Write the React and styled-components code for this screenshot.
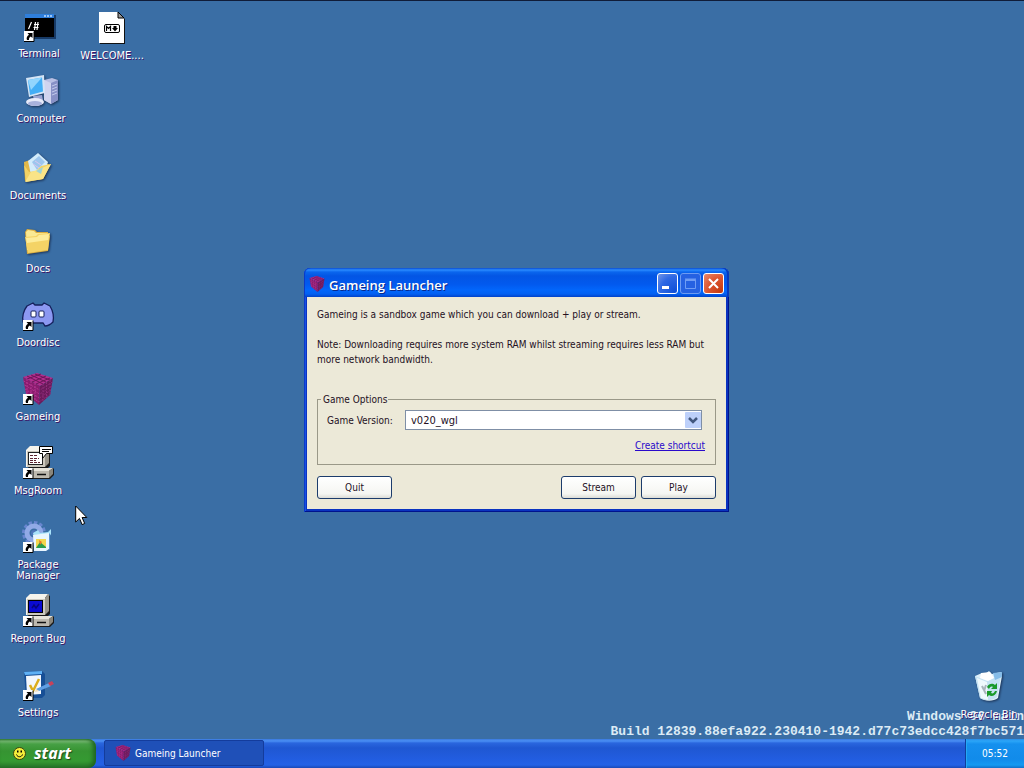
import React from "react";
import styled, { createGlobalStyle } from "styled-components";

const Global = createGlobalStyle`
  *, *::before, *::after { box-sizing: border-box; }
  body { margin: 0; background: #3a6ea5; }
  button, select { font: inherit; color: inherit; }
`;

const Screen = styled.div`
  min-height: 100vh;
  display: flex;
  flex-direction: column;
  background: #3a6ea5;
  font-family: "DejaVu Sans Condensed", "Liberation Sans", sans-serif;
  font-size: 10px;
`;

const Desktop = styled.main`
  position: relative;
  flex: 1;
  overflow: hidden;
  border-top: 1px solid #101c38;
`;

const Shortcut = styled.button`
  position: absolute;
  top: ${(p) => p.$y}px;
  ${(p) => (p.$right !== undefined ? `right: ${p.$right}px;` : `left: ${p.$x}px;`)}
  width: 74px;
  padding: 0;
  border: 0;
  background: none;
  display: flex;
  flex-direction: column;
  align-items: center;
  gap: 6px;
  color: #fff;
  font-size: 11px;
  line-height: 11px;
  text-shadow: 1px 1px #3c1466;
  z-index: 2;
`;

const IconFrame = styled.svg`
  width: 32px;
  height: 32px;
  overflow: visible;
  filter: ${(p) => (p.$shadow ? "drop-shadow(1px 1px 1px rgba(0, 0, 20, 0.55))" : "none")};
`;

const Watermark = styled.p`
  position: absolute;
  right: 0;
  bottom: 0;
  margin: 0;
  text-align: right;
  color: #dcebf5;
  font-family: "Liberation Mono", monospace;
  font-size: 13px;
  font-weight: 700;
  line-height: 15px;
`;

const Pointer = styled.svg`
  position: absolute;
  left: 75px;
  top: 504px;
  width: 13px;
  height: 21px;
`;

const Window = styled.section`
  position: absolute;
  left: 304px;
  top: 267px;
  width: 425px;
  padding: 0 3px 3px;
  border-radius: 6px 6px 0 0;
  background: #0a33c0;
  box-shadow: inset 1px 0 #0a3ac8, inset -1px -1px #00138c, inset 2px 0 #1750e4;
  z-index: 3;
`;

const TitleBar = styled.header`
  height: 29px;
  margin: 0 -3px;
  padding: 2px 5px 0;
  display: flex;
  align-items: center;
  gap: 4px;
  border-radius: 6px 6px 0 0;
  background: linear-gradient(#0a4bd0 0, #2a8bff 2px, #0a66ee 4px, #0355e4 8px, #0259ee 16px, #0266fb 22px, #0260f2 26px, #0242c8 29px);
  box-shadow: inset 1px 0 #0a3ac8, inset -2px 0 #0638bd;
`;

const Title = styled.h1`
  flex: 1;
  margin: 0;
  padding-top: 2px;
  color: #fff;
  font-family: "Open Sans", "Noto Sans", sans-serif;
  font-size: 13px;
  font-weight: 600;
  line-height: 18px;
  text-shadow: 1px 1px #0a2a8c;
`;

const TitleButtons = styled.div`
  display: flex;
  gap: 2px;
`;

const TitleButton = styled.button`
  width: 21px;
  height: 21px;
  padding: 0;
  border: 1px solid ${(p) => (p.disabled ? "#6d9bf2" : "#fff")};
  border-radius: 3px;
  background: ${(p) =>
    p.$close
      ? "radial-gradient(circle at 90% 90%, #c63a0e 0, #dc5530 55%, #e98a6c 100%)"
      : p.disabled
      ? "#2561e2"
      : "radial-gradient(circle at 90% 90%, #1050d8 0, #2f69e4 60%, #7396e8 100%)"};
  display: grid;
  place-items: center;

  svg { width: 19px; height: 19px; }
`;

const Body = styled.div`
  padding: 10px;
  background: #ece9d8;
  color: #24101e;
  line-height: 15px;
`;

const Text = styled.p`
  margin: 0 0 15px;
`;

const Options = styled.fieldset`
  margin: 25px 0 11px;
  padding: 3px 10px 11px 9px;
  border: 1px solid #9a9888;

  legend { margin-left: -6px; padding: 0 1px 0 2px; }
`;

const Field = styled.div`
  display: flex;
  align-items: center;
  margin-right: 3px;

  label { width: 78px; }
`;

const SelectBox = styled.div`
  position: relative;
  flex: 1;
  height: 20px;

  svg {
    position: absolute;
    right: 1px;
    top: 2px;
    width: 16px;
    height: 16px;
    pointer-events: none;
  }
`;

const Select = styled.select`
  display: block;
  appearance: none;
  width: 100%;
  height: 20px;
  padding: 0 20px 0 5px;
  border: 1px solid #7f8fa6;
  border-radius: 0;
  background: #fff;
  font-size: 11px;
`;

const LinkRow = styled.div`
  margin-top: 9px;
  line-height: 14px;
  text-align: right;

  a { color: #2a0acb; text-decoration: underline; }
`;

const Actions = styled.div`
  display: flex;
  gap: 5px;
`;

const Button = styled.button`
  width: 75px;
  height: 23px;
  padding: 0;
  border: 1px solid #1c3c6c;
  border-radius: 3px;
  background: linear-gradient(#fff, #f5f6f2 80%, #dcdcd6);
  ${(p) => p.$first && "margin-right: auto;"}
`;

const Taskbar = styled.footer`
  height: 29px;
  display: flex;
  align-items: stretch;
  color: #fff;
  background: linear-gradient(#3a7ade 0, #4a8ff5 2px, #2a66de 4px, #1f57d2 9px, #225de0 20px, #2462e6 26px, #1a49b6 29px);
`;

const StartButton = styled.button`
  width: 96px;
  padding: 0 0 1px 13px;
  border: 0;
  border-radius: 0 8px 8px 0;
  display: flex;
  align-items: center;
  gap: 8px;
  background: linear-gradient(#3f8a3f 0, #7dbd78 2px, #47a045 5px, #369432 12px, #359a32 22px, #27762a 29px);
  box-shadow: inset -3px 0 4px #1f6420;
  color: #fff;
  font-family: "Noto Sans", sans-serif;
  font-size: 16px;
  font-weight: 700;
  font-style: italic;
  line-height: 20px;
  text-shadow: 1px 1px 1px #1c4a1c;

  svg { width: 13px; height: 13px; }
`;

const TaskButton = styled.button`
  width: 160px;
  height: 26px;
  margin: 1px 0 0 8px;
  padding: 0 10px;
  border: 1px solid #143c9c;
  border-radius: 2px;
  display: flex;
  align-items: center;
  gap: 4px;
  background: #1f50b8;
  text-align: left;
`;

const Tray = styled.time`
  width: 59px;
  margin-left: auto;
  border-left: 1px solid #0f3f9c;
  display: grid;
  place-items: center;
  background: linear-gradient(#2a8ce8 0, #2ba6f8 2px, #1590ee 5px, #118bea 20px, #149af2 26px, #1070c8 29px);
  box-shadow: inset 1px 0 #25a8f5;
`;

const SmallIcon = styled.svg`
  width: 16px;
  height: 16px;
`;

const Arrow = () => (
  <g>
    <rect x="1" y="21" width="10" height="11" fill="#fff" />
    <path d="M1 31.500h10v-10" fill="none" stroke="#000" />
    <path d="M4.500 23h5v5l-1.700-1.600c-1.600 1-2 2-1.800 3.600H4c-1-2 .2-4 2-5.200z" fill="#000" />
  </g>
);

const CubeArt = () => (
  <g>
    <path d="M1 4L15 0l16 5-13 8z" fill="#b32d8e" />
    <path d="M1 4l17 9-1 19L4 21z" fill="#8a1c6e" />
    <path d="M31 5l-13 8-1 19 11-10z" fill="#6b1a5a" />
    <path d="M5 3l16 8M9 2l15 7M13 1l15 6M5 6L19 1M10 9l14-6M14 11l14-6" stroke="#6c1658" strokeWidth="1" />
    <path d="M1.500 8l16 9M2.500 12l15 9M3 16l14.500 9M4 20l13 9M5 6v16M9 8v17M13 10v18" stroke="#b23490" strokeWidth="1" strokeDasharray="2 1" />
    <path d="M30.500 9L18 17M30 13l-12 8M29 17l-11.500 8M28.500 21L17 29M21 11v18M24.500 9v16M28 7v15" stroke="#8c2a78" strokeWidth="1" strokeDasharray="2 1" />
  </g>
);

const PcArt = () => (
  <g>
    <path d="M6 20V3l3-3h17l2 1v18l-3 3H7z" fill="#1a1a1a" />
    <path d="M4 3l4-4h18l-3 4z" fill="#f6f4ec" />
    <path d="M4 3h19v17H4z" fill="#cdc9bf" />
    <path d="M4 3h19v1H5v16H4z" fill="#f6f4ec" />
    <path d="M23 3l3-4h1v17l-4 4z" fill="#9a968c" />
    <path d="M1 24l4-3h26l1 1v6l-4 4H1z" fill="#1a1a1a" />
    <path d="M1 24l5-3h25l-4 3z" fill="#e6e3da" />
    <path d="M1 24h26v7H1z" fill="#bdb9af" />
    <path d="M27 24l4-3v6l-4 4z" fill="#8a867c" />
    <path d="M15 27.500h9" stroke="#111" strokeWidth="1.500" />
  </g>
);

const art = {
  terminal: (
    <g>
      <rect x="3" y="5" width="30" height="24" fill="#173a66" />
      <rect x="2" y="4" width="29" height="23" fill="#000" />
      <rect x="2" y="4" width="29" height="4" fill="#2f7fdc" />
      <path d="M21 6h2M24 6h2M27 6h2" stroke="#9cc6f6" strokeWidth="2" />
      <path d="M5.500 19l3-7M11 14.500h5M10.500 17.500h5M12.500 12l-1 8M15 12l-1 8" stroke="#fff" strokeWidth="1.200" fill="none" />
      <Arrow />
    </g>
  ),
  note: (
    <g>
      <path d="M4 1h19l6 6v25H4z" fill="#111" />
      <path d="M3 0h19l6 6v25H3z" fill="#fff" />
      <path d="M22 0v6h6z" fill="#9a9a9a" stroke="#000" />
      <rect x="8.500" y="12.500" width="15" height="8" rx="1.500" fill="#fff" stroke="#000" />
      <path d="M10.500 19v-4.500l2 2 2-2V19M19 14v3" fill="none" stroke="#000" strokeWidth="1.200" />
      <path d="M16 16h6l-3 3.500zM17.500 14h3v3h-3z" />
    </g>
  ),
  computer: (
    <g>
      <path d="M19 5l8-2 6 2v20l-7 4-7-4z" fill="#b8bfe4" />
      <path d="M26 8l7-3v20l-7 4z" fill="#8790c6" />
      <path d="M19 5l7 3v21l-7-4z" fill="#d0d4ef" />
      <path d="M27 11l5-2M27 14l5-2M27 17l5-2M27 20l5-2" stroke="#c3caec" />
      <path d="M8 21l9-1 1 5H9z" fill="#9aa4d3" />
      <ellipse cx="10" cy="27" rx="9" ry="4" fill="#e8ebf9" />
      <ellipse cx="10" cy="28.500" rx="7" ry="2.500" fill="#a9b2dc" />
      <path d="M1 3l18-3 1 18-16 4z" fill="#d3e4f6" />
      <path d="M3 5l14-2.500 1 14L5 20z" fill="#43aef6" />
      <path d="M3 5l14-2.500L6 15z" fill="#93d5fd" />
    </g>
  ),
  documents: (
    <g>
      <path d="M2 10l6-2 4 3 15 1-6 15L3 29z" fill="#e3b848" />
      <path d="M6 9L16 1l10 9-4 12-13 1z" fill="#d3ecfb" />
      <path d="M10 10l7-6 6 6-8 8z" fill="#9dc6ee" />
      <path d="M13 9l6 4M11 12l6 4" stroke="#d7c6f0" />
      <path d="M2 13l2 17 17-3 8-15-10 2-5 5-7 1z" fill="#f2d264" />
      <path d="M3 30L9 20l9-3 11-5-8 15z" fill="#fae487" />
      <path d="M14 19l5 3 2-7z" fill="#9fd3d7" />
    </g>
  ),
  folder: (
    <g>
      <path d="M3 7l2-3 8 1 2 2h11v3l2 1-2 15-21 3z" fill="#dcae40" />
      <path d="M4 7l2-2 6 1 2 2h11v17H5z" fill="#fae993" />
      <path d="M3 12l11-1 2-2 12-1-2 17-20 3z" fill="#f4d366" />
      <path d="M4 13l11-1 2-2 10-1-.7 6L5 18z" fill="#fdec9a" />
    </g>
  ),
  doordisc: (
    <g>
      <path d="M5 7l6-3 2 2h7l2-2 6 3c3 5 4 11 3 16-3 3-6 4-8 4l-2-3H10l-2 3c-3-1-5-2-7-4C0 17 2 11 5 7z" fill="#8c98f2" stroke="#15205c" strokeWidth="1.300" />
      <rect x="9" y="12" width="5" height="6" rx="1" fill="#fff" stroke="#15205c" />
      <rect x="17" y="12" width="5" height="6" rx="1" fill="#fff" stroke="#15205c" />
      <Arrow />
    </g>
  ),
  gameing: (
    <g>
      <CubeArt />
      <Arrow />
    </g>
  ),
  msgroom: (
    <g>
      <PcArt />
      <rect x="6.500" y="5.500" width="14" height="12" fill="#fff" stroke="#222" />
      <path d="M8 8.500h7M8 11.500h9M8 13.500h6M8 15.500h10" stroke="#5c2430" strokeDasharray="3 1" />
      <path d="M17.500-.5h13v7h-6l-4 5v-5h-3z" fill="#fff" stroke="#000" />
      <path d="M20 2.500h9M20 4.500h7" stroke="#000" />
      <Arrow />
    </g>
  ),
  packages: (
    <g>
      <circle cx="12" cy="12" r="10" fill="none" stroke="#6886cf" strokeWidth="4" strokeDasharray="3.200 2" />
      <circle cx="12" cy="12" r="7" fill="none" stroke="#91aae6" strokeWidth="5" />
      <circle cx="12" cy="12" r="3" fill="#4f76bb" />
      <path d="M11 12l5-3 2 3 8-1 3-3v5l-2 3H12z" fill="#a8e2fa" />
      <path d="M11 14l16-2v16l-3 2H12z" fill="#e9f6ff" />
      <path d="M27 12l1 1v15l-1 1z" fill="#5b93cf" />
      <path d="M14 18h10v9H14z" fill="#f4d64e" />
      <path d="M14 27l4-6 6 5v1z" fill="#2a9c4c" />
      <path d="M17 19l3 2-2 3z" fill="#e87428" />
      <Arrow />
    </g>
  ),
  report: (
    <g>
      <PcArt />
      <rect x="6.500" y="5.500" width="14" height="12" fill="#0a0ad0" stroke="#000" />
      <path d="M10 13l2-3 2 3 3-4" stroke="#05057c" strokeWidth="1.500" fill="none" />
      <Arrow />
    </g>
  ),
  settings: (
    <g>
      <path d="M2 3l18-1 3 3v21l-3 3H4z" fill="#174f96" />
      <path d="M2 3l18-1v3L3 6z" fill="#5fb1f5" />
      <path d="M4 7l15-1v19L5 26z" fill="#f2f7fd" />
      <path d="M8 16l3 6 6-12" fill="none" stroke="#dcae1e" strokeWidth="2.500" />
      <path d="M14 20l13-6 2 3-12 5z" fill="#5f9fe4" />
      <path d="M14 20l3 2-4 1z" fill="#f3dcb4" />
      <path d="M26 14l4-2 2 3-4 2z" fill="#c8425a" />
      <Arrow />
    </g>
  ),
  bin: (
    <g>
      <path d="M2 5l7-3 3 1 4-3 3 3 9-2 1 4-4 22c-5 4-14 3-18 0z" fill="#dff1fb" />
      <path d="M2 5l12 5 14-6-4 22c-5 4-13 4-17 1z" fill="#c4e2f3" />
      <path d="M4 7l10 4 1 18-7-2z" fill="#eef9fd" />
      <path d="M20 2l9-1v5l-7 3z" fill="#85bce8" />
      <path d="M8 2l9-1 4 6-6 3-8-3z" fill="#fff" />
      <path d="M9 15l4 8M13 14l-2 6" stroke="#a9b5bd" strokeWidth="2" />
      <path d="M14 16c2-4 6-4 8-2l2-2v6h-6l2-2c-2-1-3 0-4 2zM24 20c-1 5-6 6-8 4l-2 2v-6h5l-1 2c2 1 3 0 4-2z" fill="#199a2b" />
    </g>
  ),
};

const shortcuts = [
  { id: "terminal", label: "Terminal", x: 2, y: 9 },
  { id: "note", label: "WELCOME....", x: 75, y: 11 },
  { id: "computer", label: "Computer", x: 4, y: 74, shadow: true },
  { id: "documents", label: "Documents", x: 1, y: 151, shadow: true },
  { id: "folder", label: "Docs", x: 1, y: 224, shadow: true },
  { id: "doordisc", label: "Doordisc", x: 1, y: 298 },
  { id: "gameing", label: "Gameing", x: 1, y: 372 },
  { id: "msgroom", label: "MsgRoom", x: 1, y: 446 },
  { id: "packages", label: "Package Manager", x: 1, y: 520 },
  { id: "report", label: "Report Bug", x: 1, y: 594 },
  { id: "settings", label: "Settings", x: 1, y: 668 },
  { id: "bin", label: "Recycle Bin", right: -2, y: 670, shadow: true },
];

export default function App() {
  return (
    <Screen>
      <Global />
      <Desktop>
        <Watermark>
          Windows 96 main
          <br />
          Build 12839.88efa922.230410-1942.d77c73edcc428f7bc571
        </Watermark>
        {shortcuts.map((s) => (
          <Shortcut key={s.id} type="button" $x={s.x} $y={s.y} $right={s.right}>
            <IconFrame viewBox="0 0 32 32" $shadow={s.shadow} aria-hidden="true">
              {art[s.id]}
            </IconFrame>
            <span>{s.label}</span>
          </Shortcut>
        ))}
        <Window aria-label="Gameing Launcher">
          <TitleBar>
            <SmallIcon viewBox="0 0 32 32" aria-hidden="true">
              <CubeArt />
            </SmallIcon>
            <Title>Gameing Launcher</Title>
            <TitleButtons>
              <TitleButton type="button" aria-label="Minimize">
                <svg viewBox="0 0 19 19">
                  <path d="M4 12h7v3H4z" fill="#fff" />
                </svg>
              </TitleButton>
              <TitleButton type="button" aria-label="Maximize" disabled>
                <svg viewBox="0 0 19 19">
                  <path d="M4.500 5.500h10v9h-10zM4 5h11M4 6.500h11" fill="none" stroke="#6f9cf4" />
                </svg>
              </TitleButton>
              <TitleButton type="button" aria-label="Close" $close>
                <svg viewBox="0 0 19 19">
                  <path d="M5 5l9 9M14 5l-9 9" stroke="#fff" strokeWidth="2" />
                </svg>
              </TitleButton>
            </TitleButtons>
          </TitleBar>
          <Body>
            <Text>Gameing is a sandbox game which you can download + play or stream.</Text>
            <Text>
              Note: Downloading requires more system RAM whilst streaming requires less RAM but more
              network bandwidth.
            </Text>
            <Options>
              <legend>Game Options</legend>
              <Field>
                <label htmlFor="version">Game Version:</label>
                <SelectBox>
                  <Select id="version" defaultValue="v020_wgl">
                    <option value="v020_wgl">v020_wgl</option>
                  </Select>
                  <svg viewBox="0 0 16 16" aria-hidden="true">
                    <rect width="16" height="16" rx="1" fill="#bdd0fa" />
                    <path d="M4 6l4 4 4-4" fill="none" stroke="#42577e" strokeWidth="2.500" />
                  </svg>
                </SelectBox>
              </Field>
              <LinkRow>
                <a href="#shortcut">Create shortcut</a>
              </LinkRow>
            </Options>
            <Actions>
              <Button type="button" $first>Quit</Button>
              <Button type="button">Stream</Button>
              <Button type="button">Play</Button>
            </Actions>
          </Body>
        </Window>
        <Pointer viewBox="0 0 13 21" aria-hidden="true">
          <path d="M.7 1v16l3.800-3.600 2.600 6.200 2.600-1.100-2.600-6h4.700z" fill="#fff" stroke="#000" />
        </Pointer>
      </Desktop>
      <Taskbar>
        <StartButton type="button">
          <svg viewBox="0 0 13 13" aria-hidden="true">
            <circle cx="6.500" cy="6.500" r="6" fill="#f4ee3a" stroke="#3a4410" />
            <path d="M3.500 7.500c1 3 5 3 6 0" fill="none" stroke="#000" />
            <path d="M4 3.500h1.500v2H4zM7.500 3.500H9v2H7.500z" />
          </svg>
          start
        </StartButton>
        <TaskButton type="button">
          <SmallIcon viewBox="0 0 32 32" aria-hidden="true">
            <CubeArt />
          </SmallIcon>
          Gameing Launcher
        </TaskButton>
        <Tray>05:52</Tray>
      </Taskbar>
    </Screen>
  );
}
